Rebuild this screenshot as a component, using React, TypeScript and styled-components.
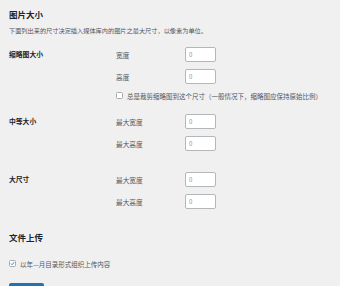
import React from 'react';
import styled, { createGlobalStyle } from 'styled-components';

const GlobalStyle = createGlobalStyle`
  html, body {
    margin: 0;
    padding: 0;
    background: #f0f0f1;
    font-family: "Noto Sans CJK SC", "Noto Sans", sans-serif;
    color: #1d2327;
  }
`

const Page = styled.div`
  padding: 0 9px;
  overflow: hidden;
  height: 286px;
  box-sizing: border-box;
`

const Title = styled.h2<{ $top: number }>`
  margin: ${p => p.$top}px 0 0;
  font-size: 8.5px;
  line-height: 10px;
  font-weight: 700;
  color: #1d2327;
`

const Description = styled.p`
  margin: 8px 0 0;
  font-size: 6.2px;
  line-height: 8px;
  color: #50575e;
`

const Group = styled.div<{ $top: number }>`
  display: grid;
  grid-template-columns: 107px 1fr;
  margin-top: ${p => p.$top}px;
`

const GroupLabel = styled.div`
  font-size: 6.8px;
  line-height: 15px;
  font-weight: 700;
  color: #1d2327;
`

const Fields = styled.div`
  display: flex;
  flex-direction: column;
  gap: 7px;
`

const FieldRow = styled.div`
  display: flex;
  align-items: center;
  height: 15px;
`

const FieldLabel = styled.label`
  width: 69px;
  font-size: 6.7px;
  color: #50575e;
`

const NumberInput = styled.input`
  box-sizing: border-box;
  width: 31px;
  height: 15px;
  padding: 0 3px;
  border: 1px solid #b4b7ba;
  border-radius: 2px;
  background: #fff;
  font-family: inherit;
  font-size: 6px;
  color: #50575e;
  outline: none;
  &::placeholder {
    color: #8c8f94;
  }
`

const CheckRow = styled.label<{ $top?: number }>`
  display: flex;
  align-items: center;
  gap: 4px;
  height: 9px;
  margin-top: ${p => p.$top ?? 0}px;
  font-size: 6.5px;
  color: #50575e;
  white-space: nowrap;
`

const Box = styled.span`
  box-sizing: border-box;
  width: 7px;
  height: 7px;
  border: 1px solid #a7aaad;
  border-radius: 1.5px;
  background: #fff;
  display: flex;
  align-items: center;
  justify-content: center;
  flex-shrink: 0;
`

const SaveButton = styled.button`
  display: block;
  margin-top: 15px;
  width: 35px;
  height: 20px;
  border: 0;
  border-radius: 2px;
  background: #2271b1;
`

function Check({ checked, children, top }: { checked?: boolean; children: React.ReactNode; top?: number }) {
  return (
    <CheckRow $top={top}>
      <Box>
        {checked && (
          <svg width="7" height="7" viewBox="0 0 10 10">
            <path d="M2 5.2 L4.2 7.4 L8.4 2.4" fill="none" stroke="#2271b1" strokeWidth="1.8" />
          </svg>
        )}
      </Box>
      {children}
    </CheckRow>
  )
}

function Field({ label }: { label: string }) {
  return (
    <FieldRow>
      <FieldLabel>{label}</FieldLabel>
      <NumberInput placeholder="0" />
    </FieldRow>
  )
}

export default function App() {
  return (
    <Page>
      <GlobalStyle />
      <Title $top={9}>图片大小</Title>
      <Description>下面列出来的尺寸决定插入媒体库内的图片之最大尺寸，以像素为单位。</Description>

      <Group $top={12}>
        <GroupLabel>缩略图大小</GroupLabel>
        <Fields>
          <Field label="宽度" />
          <Field label="高度" />
          <Check>总是裁剪缩略图到这个尺寸（一般情况下，缩略图应保持原始比例）</Check>
        </Fields>
      </Group>

      <Group $top={14}>
        <GroupLabel>中等大小</GroupLabel>
        <Fields>
          <Field label="最大宽度" />
          <Field label="最大高度" />
        </Fields>
      </Group>

      <Group $top={21}>
        <GroupLabel>大尺寸</GroupLabel>
        <Fields>
          <Field label="最大宽度" />
          <Field label="最大高度" />
        </Fields>
      </Group>

      <Title $top={23}>文件上传</Title>
      <Check checked top={17}>以年—月目录形式组织上传内容</Check>
      <SaveButton aria-label="保存更改" />
    </Page>
  )
}
